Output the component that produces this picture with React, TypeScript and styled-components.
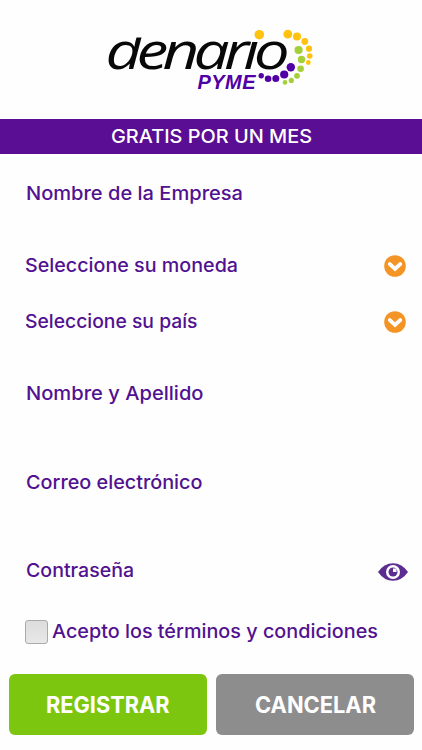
import React from 'react';
import styled, { createGlobalStyle } from 'styled-components';

const GlobalStyle = createGlobalStyle`
  * { box-sizing: border-box; }
  body { margin: 0; background: #fff; }
`;

const Screen = styled.main`
  width: 422px;
  height: 750px;
  display: flex;
  flex-direction: column;
  overflow: hidden;
  background: #fefefe;
  color: #511190;
  font-family: Inter, 'Noto Sans', sans-serif;
`;

const Header = styled.header`
  height: 119.4px;
  flex: none;
  padding: 20px 0 0 100px;
`;

const Banner = styled.h1`
  flex: none;
  margin: 0;
  height: 35px;
  display: flex;
  justify-content: center;
  background: #590e94;
  color: #fff;
  padding-top: 4.6px;
`;

const Form = styled.form`
  flex: 1;
  display: flex;
  flex-direction: column;
`;

const Field = styled.div<{ $height: number; $indent?: number; $end?: number }>`
  height: ${(p) => p.$height}px;
  flex: none;
  display: flex;
  align-items: center;
  justify-content: space-between;
  padding: 0 ${(p) => p.$end ?? 14}px 0 ${(p) => p.$indent ?? 25.5}px;
`;

const Fit = styled.svg`
  display: block;
  overflow: visible;
  flex: none;
`;

const EyeSlot = styled.span`
  padding-top: 3px;
`;

const ChevronSlot = styled.span`
  padding-top: 2px;
`;

const Checkbox = styled.span`
  width: 23px;
  height: 24px;
  flex: none;
  margin: 2px 3.5px 0 0;
  border: 1.5px solid #aaa;
  border-radius: 3px;
  background: linear-gradient(#ddd, #e8e8e8);
`;

const Terms = styled.label`
  flex: none;
  height: 26px;
  display: flex;
  align-items: center;
  padding-left: 25px;
`;

const Actions = styled.footer`
  display: grid;
  grid-template-columns: 198px 198px;
  gap: 9.5px;
  padding: 29.6px 0 0 8.5px;
`;

const Button = styled.button<{ $color: string }>`
  height: 61px;
  padding: 3px 0 0;
  border: 0;
  border-radius: 6px;
  display: flex;
  align-items: center;
  justify-content: center;
  background: ${(p) => p.$color};
  color: #fff;
  font-family: inherit;
`;

type TextProps = { children: string; width: number; size?: number; weight?: number };

/* Single line of text fitted to a fixed measure. */
const Line = ({ children, width, size = 18.8, weight = 500 }: TextProps) => (
  <Fit width={width} height={24}>
    <text
      x="0"
      y="19"
      fill="currentColor"
      fontSize={size}
      fontWeight={weight}
      textLength={width}
      lengthAdjust="spacingAndGlyphs"
    >
      {children}
    </text>
  </Fit>
);

const dots: [number, number, number, string][] = [
  [159.3, 14.7, 4.8, '#ffc20e'],
  [187.8, 14.2, 4.4, '#ffc20e'],
  [197, 16.5, 4, '#ffc20e'],
  [204.8, 21.5, 3.4, '#ffc20e'],
  [209, 28.7, 3.1, '#ffc20e'],
  [209.7, 36, 2.8, '#ffc20e'],
  [208.3, 42.5, 2.4, '#ffc20e'],
  [198.6, 30, 4.1, '#a4cf38'],
  [201.5, 39.5, 3.7, '#a4cf38'],
  [200.6, 48.7, 3.3, '#a4cf38'],
  [197, 55.8, 2.9, '#a4cf38'],
  [191.3, 60.4, 2.6, '#a4cf38'],
  [185, 62.4, 2.3, '#a4cf38'],
  [190.8, 47.2, 4.2, '#5100a5'],
  [184.2, 54.5, 4.1, '#5100a5'],
  [175.8, 58.5, 3.5, '#5100a5'],
  [168.1, 58.7, 3.3, '#5100a5'],
  [161.2, 55.8, 2.7, '#5100a5'],
];

const Logo = () => (
  <Fit width="220" height="80" role="img" aria-label="denario PYME">
    <defs>
      <clipPath id="wordmark">
        <rect x="0" y="17.5" width="220" height="60" />
      </clipPath>
    </defs>
    <g clipPath="url(#wordmark)">
      <text
        transform="translate(5.5 49.3) scale(1.24 1)"
        fontFamily="'Open Sans', 'Noto Sans', sans-serif"
        fontStyle="italic"
        fontSize="51.5"
        fontWeight="400"
        textLength="148.5"
        lengthAdjust="spacing"
        fill="#080808"
      >
        denario
      </text>
    </g>
    <text
      x="97.5"
      y="69"
      fontFamily="'Liberation Sans', sans-serif"
      fontSize="20"
      fontWeight="700"
      fontStyle="italic"
      textLength="58"
      fill="#5100a5"
    >
      PYME
    </text>
    {dots.map(([x, y, r, color]) => (
      <circle key={`${x}-${y}`} cx={x} cy={y} r={r} fill={color} />
    ))}
  </Fit>
);

const Chevron = () => (
  <ChevronSlot>
    <Fit width="22" height="22" viewBox="0 0 22 22">
      <circle cx="11" cy="11" r="10.8" fill="#f49425" />
      <path d="M5.8 9.1 11 13.9l5.2-4.8" fill="none" stroke="#fff" strokeWidth="3.9" strokeLinecap="round" />
    </Fit>
  </ChevronSlot>
);

const Eye = () => (
  <EyeSlot>
    <Fit width="30" height="20" viewBox="0 0 30 20">
      <path d="M0 10Q6 1.3 15 1.3T30 10q-6 8.7-15 8.7T0 10Z" fill="#5c2d91" />
      <circle cx="15" cy="10" r="7" fill="#fff" />
      <circle cx="15" cy="10" r="4.5" fill="#5c2d91" />
      <path d="M15 6.5V10h3.5V6.5Z" fill="#fff" />
    </Fit>
  </EyeSlot>
);

export default function App() {
  return (
    <>
      <GlobalStyle />
      <Screen>
        <Header>
          <Logo />
        </Header>
        <Banner>
          <Line width={201}>GRATIS POR UN MES</Line>
        </Banner>
        <Form>
          <Field $height={77}>
            <Line width={217}>Nombre de la Empresa</Line>
          </Field>
          <Field $height={68} $indent={24.5} $end={16}>
            <Line width={213}>Seleccione su moneda</Line>
            <Chevron />
          </Field>
          <Field $height={44} $indent={24.5} $end={16}>
            <Line width={172.5}>Seleccione su país</Line>
            <Chevron />
          </Field>
          <Field $height={99}>
            <Line width={177.5}>Nombre y Apellido</Line>
          </Field>
          <Field $height={80}>
            <Line width={176.5}>Correo electrónico</Line>
          </Field>
          <Field $height={96}>
            <Line width={108}>Contraseña</Line>
            <Eye />
          </Field>
          <Terms>
            <Checkbox role="checkbox" aria-checked={false} />
            <Line width={326}>Acepto los términos y condiciones</Line>
          </Terms>
          <Actions>
            <Button type="button" $color="#7dc610">
              <Line width={123.5} size={22.6} weight={700}>REGISTRAR</Line>
            </Button>
            <Button type="button" $color="#8d8d8d">
              <Line width={121} size={22.6} weight={700}>CANCELAR</Line>
            </Button>
          </Actions>
        </Form>
      </Screen>
    </>
  );
}
